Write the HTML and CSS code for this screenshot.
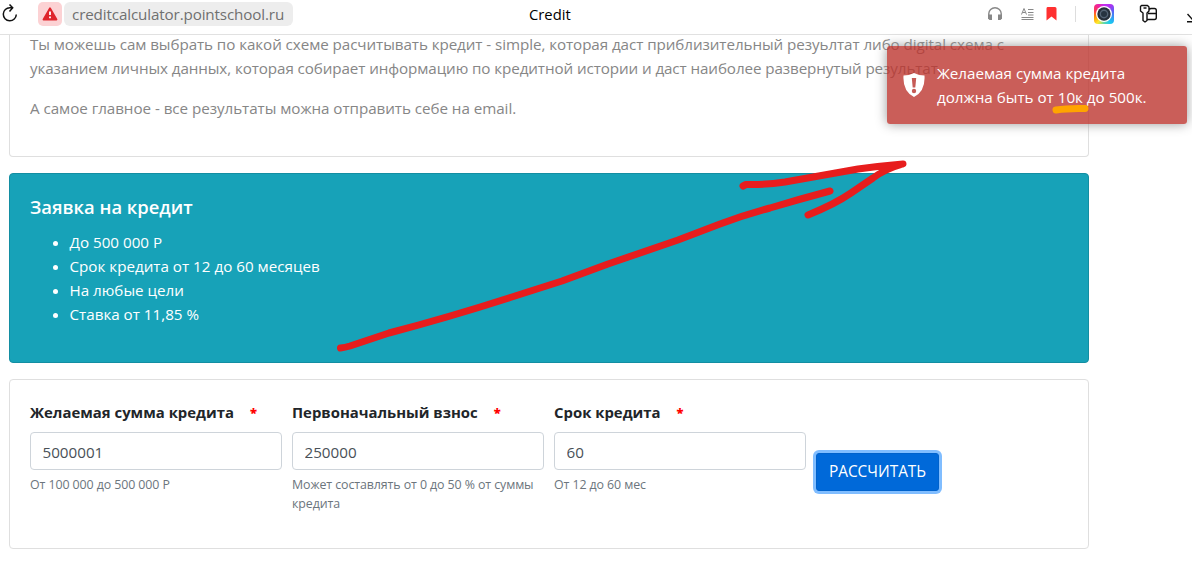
FILE: index.html
```html
<!DOCTYPE html>
<html lang="ru">
<head>
<meta charset="utf-8">
<title>Credit</title>
<link rel="stylesheet" href="styles.css">
</head>
<body>
<header class="bar">
  <svg class="reload" width="18" height="20" viewBox="0 0 18 20"><path d="M12 4.800H10A6.500 6.500 0 1 0 16.300 11.500M9.500 1.500L12.700 4.800L9.500 8.500" fill="none" stroke="#111" stroke-width="1.500"/></svg>
  <span class="warn"><svg width="16" height="14" viewBox="0 0 16 14"><path d="M8 1.300L14.500 12.500H1.500Z" fill="#df242c" stroke="#df242c" stroke-width="1.800" stroke-linejoin="round"/><path d="M8 4.500V8M8 9.500V11.200" stroke="#fff" stroke-width="1.800"/></svg></span>
  <span class="url">creditcalculator.pointschool.ru</span>
  <span class="title">Credit</span>
  <div class="tools">
    <svg class="phones" width="16" height="16" viewBox="0 0 16 16"><path d="M1.800 13V7.500A6.200 5.800 0 0 1 14.200 7.500V13" fill="none" stroke="#888" stroke-width="1.400"/><path d="M1 8.500H5V14H2.500L1 12.500ZM15 8.500H11V14H13.500L15 12.500Z" fill="#888"/></svg>
    <svg class="reader" width="13" height="14" viewBox="0 0 13 14"><path d="M.5 7.500L3 1.500L5.500 7.500M1.500 5.500H4.500M7 2.500H12.500M7 5.500H12.500M7 8H12.500M.5 10.500H12.500M.5 12.500H12.500" fill="none" stroke="#888" stroke-width="1"/></svg>
    <svg class="mark" width="11" height="14" viewBox="0 0 11 14"><path d="M1.500 0H9Q10.500 0 10.500 1.500V13.500L5.500 9.500L.5 13.500V1.500Q.5 0 1.500 0Z" fill="#ff3030"/></svg>
    <i class="sep"></i>
    <span class="camera"><svg width="20" height="20" viewBox="0 0 20 20"><circle cx="10" cy="10" r="8" fill="#fff"/><circle cx="10" cy="10" r="6.700" fill="#27303b"/><circle cx="10" cy="10" r="4.400" fill="#546475"/><circle cx="10" cy="10" r="3" fill="#263340"/></svg></span>
    <svg class="keys" width="19" height="20" viewBox="0 0 19 20"><path d="M2.500 1.500H8.500L10 3V7L8 9V16.500L6 18L4 16.500V9L1.500 7V2.500ZM4.500 4H7.500M10.500 5L12 4.500H15.500Q17.300 4.500 17.300 6.500V13.500Q17.300 15.500 15.500 15.500H8.500M9 9.500H17" fill="none" stroke="#111" stroke-width="1.400" stroke-linejoin="round"/></svg>
    <svg class="load" width="6" height="12" viewBox="0 0 6 12"><path d="M.5 3L5.500 8.500M0 10.700H6" stroke="#111" stroke-width="1.400"/></svg>
  </div>
</header>
<main>
  <section class="card intro">
    <p><span class="l1">Ты можешь сам выбрать по какой схеме расчитывать кредит - simple, которая даст приблизительный резуьлтат либо digital схема с</span><br><span class="l2">указанием личных данных, которая собирает информацию по кредитной истории и даст наиболее развернутый результат.</span></p>
    <p><span class="l3">А самое главное - все результаты можна отправить себе на email.</span></p>
  </section>
  <section class="card offer">
    <h2>Заявка на кредит</h2>
    <ul>
      <li>До 500 000 Р</li>
      <li>Срок кредита от 12 до 60 месяцев</li>
      <li>На любые цели</li>
      <li>Ставка от 11,85 %</li>
    </ul>
  </section>
  <form class="card form">
    <div class="field"><label for="sum"><span>Желаемая сумма кредита</span><b>*</b></label><input id="sum" value="5000001"><small>От 100 000 до 500 000 Р</small></div>
    <div class="field"><label for="fee"><span>Первоначальный взнос</span><b>*</b></label><input id="fee" value="250000"><small>Может составлять от 0 до 50 % от суммы<br>кредита</small></div>
    <div class="field"><label for="term"><span>Срок кредита</span><b>*</b></label><input id="term" value="60"><small>От 12 до 60 мес</small></div>
    <button type="button">РАССЧИТАТЬ</button>
  </form>
</main>
<aside class="toast">
  <svg width="22" height="24" viewBox="0 0 22 24"><path d="M11 0Q16 2.500 21.500 2.500Q22.500 18 11 24Q-.5 18 .5 2.500Q6 2.500 11 0Z" fill="#fff"/><path d="M8.800 5H13.200L12.300 14.500H9.700Z" fill="#c65b56"/><circle cx="11" cy="18" r="2.200" fill="#c65b56"/></svg>
  <div>Желаемая сумма кредита<br>должна быть от 10к до 500к.</div>
</aside>
<svg class="ink" width="1192" height="561" viewBox="0 0 1192 561" fill="none" stroke-linecap="round" stroke-linejoin="round">
  <g stroke="#e71d1d" stroke-width="7">
    <path d="M340.500 348Q345 347.500 350 346L389 333Q450 317 515 296L562 281L608 264L678 240L720 224Q744 215 770 208Q800 199 830 191"/>
    <path d="M743 186L746 184.500Q765 185 785 182L858 169Q880 166 903 164Q885 169 873 178L851 193Q835 204 808 215"/>
  </g>
  <path d="M1056 110Q1068 108 1085 108.500" stroke="#ffa400" stroke-width="7"/>
</svg>
</body>
</html>
```
FILE: styles.css
```css
* { box-sizing: border-box; }
body { margin: 0; height: 561px; overflow: hidden; position: relative; background: #fff; color: #212529; font: 15.2px/24px "Open Sans", "Noto Sans", sans-serif; }
.bar { height: 35px; display: flex; align-items: flex-start; border-bottom: 1px solid #e1e1e1; background: #fff; }
.reload { margin: 3px 0 0 0; }
.warn { width: 24px; height: 24px; margin: 2px 2px 0 20px; border-radius: 5px; background: #fcd2d4; display: flex; align-items: center; justify-content: center; }
.url { width: 229px; height: 24px; margin-top: 2px; padding-left: 8px; border-radius: 6px; background: #ededed; color: #707070; line-height: 24px; white-space: nowrap; letter-spacing: -.13px; }
.title { margin: 2px 0 0 236px; width: 60px; color: #000; font-size: 14.8px; line-height: 25px; }
.tools { display: flex; margin-left: auto; width: 205px; align-items: flex-start; }
.tools > * { flex: none; }
.phones { margin-top: 6px; }
.reader { margin: 7px 0 0 18px; }
.mark { margin: 7px 0 0 12px; }
.sep { width: 1px; height: 16px; margin: 6px 0 0 18px; background: #ddd; }
.camera { width: 20px; height: 20px; margin: 4px 0 0 18px; border-radius: 4px; background: conic-gradient(#ef22a0, #a438ec, #3895f5, #19d2e1, #8de05a, #ffe82d, #ff9100, #ff3e45, #ef22a0); background: conic-gradient(#c42cf0, #b030f0, #5a60f5, #3895f5, #19c8f0, #5ad8b0, #ffe82d, #ff9100, #ff3e45, #ef22a0, #c42cf0); }
.camera svg { display: block; }
.keys { margin: 4px 0 0 25px; }
.load { margin: 11px 0 0 29px; }
main { padding-left: 9px; width: 1089px; }
.card { border: 1px solid #dfdfdf; border-radius: 4px; }
.intro { display: flow-root; height: 122px; padding: 0 20px; border-top: 0; border-radius: 0 0 4px 4px; color: #868686; white-space: nowrap; }
.intro p { margin: 0 0 16px; }
.intro p:first-child { margin-top: -3px; }
.l1 { letter-spacing: -.068px; }
.l2 { letter-spacing: -.09px; }
.l3 { letter-spacing: -.045px; }
.offer { height: 190px; margin-top: 16px; padding: 20px; background: #17a2b8; border-color: #138ea2; color: #fff; }
h2 { margin: 0 0 11px; font-size: 18.4px; line-height: 25px; font-weight: 600; }
ul { margin: 0; padding-left: 39.5px; }
.form { height: 170px; margin-top: 16px; padding: 20px; display: flex; gap: 10px; }
.field { width: 252px; }
label { display: flex; height: 24px; margin-bottom: 8px; font-size: 14.9px; font-weight: 700; white-space: nowrap; }
label b { color: red; margin-left: 16px; font-size: 13px; }
input { display: block; width: 252px; height: 38px; margin: 0 0 5px; padding: 2px 12px 0 11.500px; border: 1px solid #ced4da; border-radius: 4px; color: #495057; font: inherit; }
small { display: block; font-size: 12.4px; line-height: 19px; color: #6c757d; white-space: nowrap; letter-spacing: -.09px; }
button { width: 123px; height: 38px; margin: 53px 0 0; padding: 0; border: 1px solid #0062cc; border-radius: 3px; background: #0069d9; box-shadow: 0 0 0 3px #80bdff; color: #fff; font: inherit; font-size: 15.4px; }
.toast { position: absolute; left: 887px; top: 46px; width: 300px; height: 78px; padding: 15px 16px; display: flex; gap: 12px; border-radius: 3px; background: rgba(189, 54, 47, .8); box-shadow: 0 0 12px #999; color: #fff; white-space: nowrap; }
.toast svg { flex: none; margin-top: 12px; }
.ink { position: absolute; left: 0; top: 0; }
```
